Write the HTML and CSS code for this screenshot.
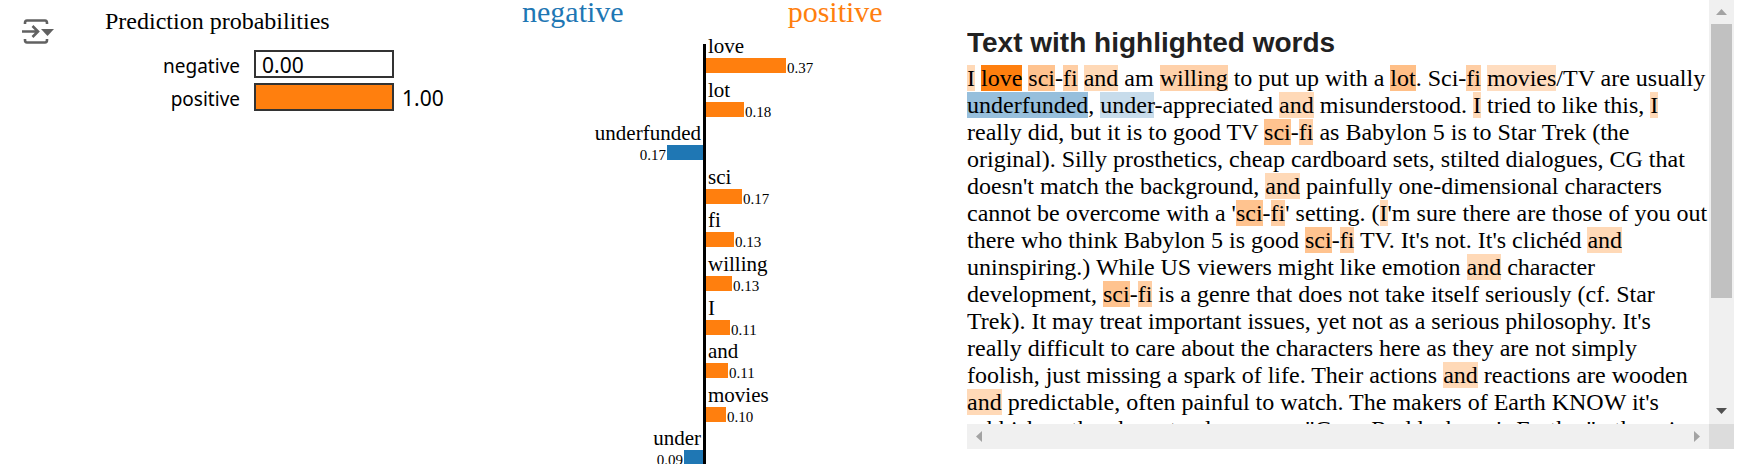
FILE: index.html
```html
<!DOCTYPE html>
<html lang="en">
<head>
<meta charset="utf-8">
<title>Prediction explanation</title>
<link rel="stylesheet" href="styles.css">
</head>
<body>
<main class="output">
  <div class="gutter">
    <button class="output-menu" type="button" aria-label="Output actions">
      <svg width="32" height="26" viewBox="0 0 32 26" fill="none" stroke="#616161" stroke-width="2.6">
        <path d="M3 5V4Q3 1.500 5 1.500H23Q25 1.500 25 4V5"/>
        <path d="M3 20V21Q3 23.500 5 23.500H23Q25 23.500 25 21V20"/>
        <path d="M0 12.500H15M10.500 7L16 12.500L10.500 18"/>
        <path d="M19 10H32L25.500 17Z" fill="#616161" stroke="none"/>
      </svg>
    </button>
  </div>

  <section class="probs">
    <h2 class="probs-title">Prediction probabilities</h2>
    <div class="prob-row"><span class="prob-label">negative</span><span class="prob-bar">0.00</span></div>
    <div class="prob-row"><span class="prob-label">positive</span><span class="prob-bar full"></span><span class="prob-value">1.00</span></div>
  </section>

  <section class="chart">
    <div class="chart-head"><span class="neg-name">negative</span><span class="pos-name">positive</span></div>
    <div class="bars">
      <div class="item pos"><span class="word">love</span><div class="line"><span class="bar" style="width:80px"></span><span class="num">0.37</span></div></div>
      <div class="item pos"><span class="word">lot</span><div class="line"><span class="bar" style="width:38px"></span><span class="num">0.18</span></div></div>
      <div class="item neg"><span class="word">underfunded</span><div class="line"><span class="bar" style="width:36px"></span><span class="num">0.17</span></div></div>
      <div class="item pos"><span class="word">sci</span><div class="line"><span class="bar" style="width:36px"></span><span class="num">0.17</span></div></div>
      <div class="item pos"><span class="word">fi</span><div class="line"><span class="bar" style="width:28px"></span><span class="num">0.13</span></div></div>
      <div class="item pos"><span class="word">willing</span><div class="line"><span class="bar" style="width:26px"></span><span class="num">0.13</span></div></div>
      <div class="item pos"><span class="word">I</span><div class="line"><span class="bar" style="width:24px"></span><span class="num">0.11</span></div></div>
      <div class="item pos"><span class="word">and</span><div class="line"><span class="bar" style="width:22px"></span><span class="num">0.11</span></div></div>
      <div class="item pos"><span class="word">movies</span><div class="line"><span class="bar" style="width:20px"></span><span class="num">0.10</span></div></div>
      <div class="item neg"><span class="word">under</span><div class="line"><span class="bar" style="width:19px"></span><span class="num">0.09</span></div></div>
    </div>
  </section>

  <section class="viewer">
    <div class="text-pane">
      <h2 class="text-title">Text with highlighted words</h2>
      <p class="review"><mark class="w-i">I</mark> <mark class="w-love">love</mark> <mark class="w-sci">sci</mark>-<mark class="w-fi">fi</mark> <mark class="w-and">and</mark> am <mark class="w-willing">willing</mark> to put up with a <mark class="w-lot">lot</mark>. Sci-<mark class="w-fi">fi</mark> <mark class="w-movies">movies</mark>/TV are usually <mark class="w-underfunded">underfunded</mark>, <mark class="w-under">under</mark>-appreciated <mark class="w-and">and</mark> misunderstood. <mark class="w-i">I</mark> tried to like this, <mark class="w-i">I</mark> really did, but it is to good TV <mark class="w-sci">sci</mark>-<mark class="w-fi">fi</mark> as Babylon 5 is to Star Trek (the original). Silly prosthetics, cheap cardboard sets, stilted dialogues, CG that doesn't match the background, <mark class="w-and">and</mark> painfully one-dimensional characters cannot be overcome with a '<mark class="w-sci">sci</mark>-<mark class="w-fi">fi</mark>' setting. (<mark class="w-i">I</mark>'m sure there are those of you out there who think Babylon 5 is good <mark class="w-sci">sci</mark>-<mark class="w-fi">fi</mark> TV. It's not. It's clichéd <mark class="w-and">and</mark> uninspiring.) While US viewers might like emotion <mark class="w-and">and</mark> character development, <mark class="w-sci">sci</mark>-<mark class="w-fi">fi</mark> is a genre that does not take itself seriously (cf. Star Trek). It may treat important issues, yet not as a serious philosophy. It's really difficult to care about the characters here as they are not simply foolish, just missing a spark of life. Their actions <mark class="w-and">and</mark> reactions are wooden <mark class="w-and">and</mark> predictable, often painful to watch. The makers of Earth KNOW it's rubbish as they have to always say "Gene Roddenberry's Earth..." otherwise</p>
    </div>
    <div class="vbar">
      <svg width="25" height="24" viewBox="0 0 25 24"><path d="M7 15L12.500 9L18 15Z" fill="#a3a3a3"/></svg>
      <div class="track"><div class="thumb"></div></div>
      <svg width="25" height="24" viewBox="0 0 25 24"><path d="M7 8L12.500 14L18 8Z" fill="#505050"/></svg>
    </div>
    <div class="hbar">
      <svg width="25" height="25" viewBox="0 0 25 25"><path d="M15 7L9 12.500L15 18Z" fill="#a3a3a3"/></svg>
      <svg width="25" height="25" viewBox="0 0 25 25"><path d="M10 7L16 12.500L10 18Z" fill="#a3a3a3"/></svg>
    </div>
    <div class="corner"></div>
  </section>
</main>
</body>
</html>
```

FILE: styles.css
```css
* {
  box-sizing: border-box;
}

body {
  margin: 0;
  background: #fff;
  color: #000;
  font-family: "Liberation Serif", serif;
}

.output {
  display: grid;
  grid-template-columns: 105px 417fr 445fr 767fr;
  grid-template-rows: minmax(0, 1fr);
  height: 100vh;
  padding-right: 3px;
  overflow: hidden;
}

svg {
  display: block;
}

.gutter {
  padding: 19px 0 0 22px;
}

.output-menu {
  padding: 0;
  border: 0;
  background: none;
}

.probs {
  display: flex;
  flex-direction: column;
  gap: 5px;
  padding-top: 7px;
}

.probs-title {
  margin: 0 0 10px;
  font-size: 24px;
  line-height: 28px;
  font-weight: 400;
}

.prob-row {
  display: flex;
  height: 28px;
  font: 21px/30px "Noto Sans", sans-serif;
}

.prob-label {
  width: 135px;
  text-align: right;
  font-size: 19px;
  line-height: 32px;
}

.prob-bar {
  width: 140px;
  height: 28px;
  margin-left: 14px;
  padding-left: 6px;
  border: 2px solid #333;
  line-height: 26px;
}

.prob-bar.full {
  background: #ff7f0e;
}

.prob-value {
  margin-left: 8px;
}

.chart {
  display: flex;
  flex-direction: column;
  min-height: 0;
}

.chart-head {
  display: flex;
  flex: none;
  gap: 164px;
  height: 28px;
  font-size: 30px;
  line-height: 24px;
}

.neg-name {
  color: #1f77b4;
}

.pos-name {
  color: #ff7f0e;
}

.bars {
  position: relative;
  flex: 1;
  display: grid;
  grid-auto-rows: minmax(0, 1fr);
  min-height: 0;
}

.bars::before {
  content: "";
  position: absolute;
  top: 16px;
  bottom: 0;
  left: 181px;
  width: 3px;
  background: #000;
}

.item {
  display: flex;
  flex-direction: column;
  padding-top: 7px;
}

.item.pos {
  margin-left: 184px;
}

.item.neg {
  width: 181px;
  align-items: flex-end;
}

.word {
  padding: 0 2px;
  font-size: 21px;
  line-height: 23px;
}

.line {
  display: flex;
  gap: 1px;
}

.neg .line {
  flex-direction: row-reverse;
}

.bar {
  height: 15px;
  background: #ff7f0e;
}

.neg .bar {
  background: #1f77b4;
}

.num {
  font-size: 15px;
  line-height: 21px;
}

.viewer {
  display: grid;
  grid-template-columns: minmax(0, 1fr) 25px;
  grid-template-rows: minmax(0, 1fr) 25px;
  padding-bottom: 15px;
  min-height: 0;
}

.text-pane {
  overflow: hidden;
  padding-top: 27px;
}

.text-title {
  margin: 0 0 6px;
  color: #212121;
  font: bold 28px/32px "Liberation Sans", sans-serif;
}

.review {
  margin: 0;
  font-size: 24px;
  line-height: 27px;
}

mark {
  color: inherit;
}

.w-love {
  background: #ff7f0e;
}

.w-lot {
  background: #ffbf87;
}

.w-sci {
  background: #ffc38f;
}

.w-fi {
  background: #ffcea4;
}

.w-willing {
  background: #ffd1aa;
}

.w-i,
.w-and {
  background: #ffd9b7;
}

.w-movies {
  background: #ffddc0;
}

.w-underfunded {
  background: #97bfdc;
}

.w-under {
  background: #c7dceb;
}

.vbar {
  display: flex;
  flex-direction: column;
  background: #f0f0f0;
}

.track {
  flex: 1;
  padding: 0 2px;
}

.thumb {
  height: 73%;
  background: #c1c1c1;
}

.hbar {
  display: flex;
  justify-content: space-between;
  background: #f0f0f0;
}

.corner {
  background: #dcdcdc;
}
```
